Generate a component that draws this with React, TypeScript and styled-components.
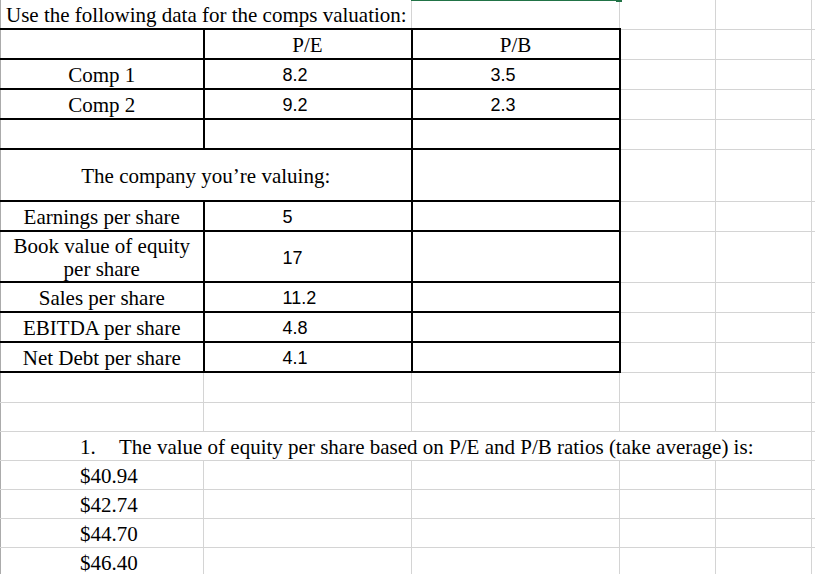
import React from "react";
import styled, { createGlobalStyle, css } from "styled-components";

const GlobalStyle = createGlobalStyle`
	html, body {
		margin: 0;
		padding: 0;
		background: #ffffff;
		overflow: hidden;
	}
`;

const GRID = "#d4d4d4";
const EDGE = "#ababab";
const INK = "#000000";

const Sheet = styled.table`
	border-collapse: collapse;
	table-layout: fixed;
	width: 815px;
	color: ${INK};
	font-family: "Liberation Serif", "Times New Roman", serif;
	font-size: 21px;
`;

const Row = styled.tr<{ $h: number; $top?: boolean }>`
	height: ${(p) => p.$h}px;
	${(p) =>
		p.$top &&
		css`
			td {
				border-top: none;
			}
		`}
`;

const Cell = styled.td<{
	$box?: boolean;
	$first?: boolean;
	$center?: boolean;
	$num?: boolean;
	$indent?: number;
}>`
	position: relative;
	border: 1px solid ${GRID};
	padding: 2px 4px 0;
	vertical-align: middle;
	line-height: 24px;
	white-space: nowrap;
	overflow: visible;
	text-align: ${(p) => (p.$center ? "center" : "left")};
	${(p) =>
		p.$box &&
		css`
			border: 2px solid ${INK};
		`}
	${(p) =>
		p.$first &&
		css`
			border-left: 1px solid ${EDGE};
		`}
	${(p) =>
		p.$num &&
		css`
			font-family: "Liberation Sans", Arial, sans-serif;
			font-size: 18px;
		`}
	${(p) =>
		p.$indent !== undefined &&
		css`
			padding-left: ${p.$indent}px;
		`}
`;

const Wrapped = styled.div`
	white-space: normal;
	line-height: 23px;
`;

const Marker = styled.span`
	display: inline-block;
	width: 39px;
`;

// selection frame of the cell above, only its lower edge is visible
const Selection = styled.span`
	position: absolute;
	top: -1px;
	left: -1px;
	width: 205px;
	height: 2px;
	background: #217346;
	&::after {
		content: "";
		position: absolute;
		right: -6px;
		top: 0;
		width: 6px;
		height: 3px;
		background: #217346;
	}
`;

const Spare = () => (
	<>
		<Cell />
		<Cell />
		<Cell />
	</>
);

const peers = [
	{ name: "Comp 1", pe: "8.2", pb: "3.5" },
	{ name: "Comp 2", pe: "9.2", pb: "2.3" },
];

const target = [
	{ label: "Earnings per share", value: "5", h: 30 },
	{ label: "Book value of equity per share", value: "17", h: 51, wrap: true },
	{ label: "Sales per share", value: "11.2", h: 30 },
	{ label: "EBITDA per share", value: "4.8", h: 30 },
	{ label: "Net Debt per share", value: "4.1", h: 30 },
];

const answers = ["$40.94", "$42.74", "$44.70", "$46.40"];

const App = () => {
	return (
		<>
			<GlobalStyle />
			<Sheet>
				<colgroup>
					<col style={{ width: 203 }} />
					<col style={{ width: 208 }} />
					<col style={{ width: 208 }} />
					<col style={{ width: 96 }} />
					<col style={{ width: 96 }} />
					<col style={{ width: 4 }} />
				</colgroup>
				<tbody>
					<Row $h={29} $top>
						<Cell colSpan={2} $first $indent={5}>
							Use the following data for the comps valuation:
						</Cell>
						<Cell>
							<Selection />
						</Cell>
						<Spare />
					</Row>
					<Row $h={30}>
						<Cell $box $first />
						<Cell $box $center>
							P/E
						</Cell>
						<Cell $box $center>
							P/B
						</Cell>
						<Spare />
					</Row>
					{peers.map((c) => (
						<Row $h={30} key={c.name}>
							<Cell $box $first $center>
								{c.name}
							</Cell>
							<Cell $box $num $indent={78}>
								{c.pe}
							</Cell>
							<Cell $box $num $indent={78}>
								{c.pb}
							</Cell>
							<Spare />
						</Row>
					))}
					<Row $h={30}>
						<Cell $box $first />
						<Cell $box />
						<Cell $box />
						<Spare />
					</Row>
					<Row $h={52}>
						<Cell colSpan={2} $box $first $center>
							The company you’re valuing:
						</Cell>
						<Cell $box />
						<Spare />
					</Row>
					{target.map((t) => (
						<Row $h={t.h} key={t.label}>
							<Cell $box $first $center>
								{t.wrap ? (
									<Wrapped>
										Book value of equity
										<br />
										per share
									</Wrapped>
								) : (
									t.label
								)}
							</Cell>
							<Cell $box $num $indent={78}>
								{t.value}
							</Cell>
							<Cell $box />
							<Spare />
						</Row>
					))}
					<Row $h={30}>
						<Cell $first />
						<Cell />
						<Cell />
						<Spare />
					</Row>
					<Row $h={29}>
						<Cell $first />
						<Cell />
						<Cell />
						<Spare />
					</Row>
					<Row $h={29}>
						<Cell colSpan={5} $first $indent={79}>
							<Marker>1.</Marker>The value of equity per share based on
							P/E and P/B ratios (take average) is:
						</Cell>
						<Cell />
					</Row>
					{answers.map((a) => (
						<Row $h={29} key={a}>
							<Cell $first $indent={79}>
								{a}
							</Cell>
							<Cell />
							<Cell />
							<Spare />
						</Row>
					))}
				</tbody>
			</Sheet>
		</>
	);
};

export default App;
